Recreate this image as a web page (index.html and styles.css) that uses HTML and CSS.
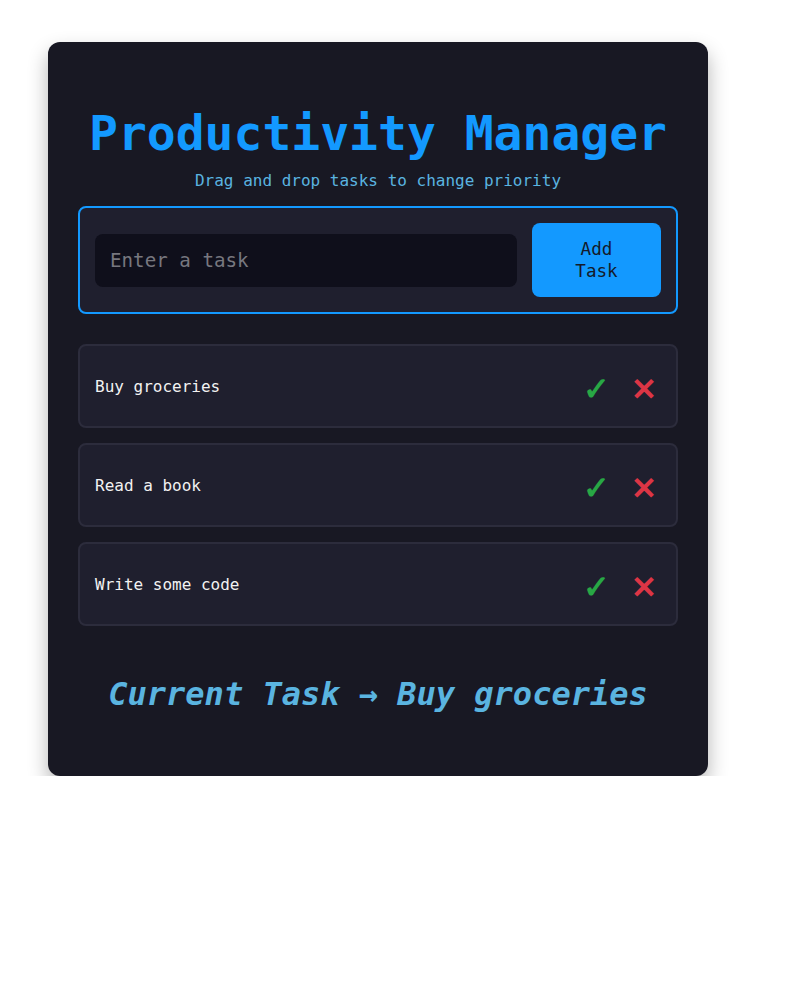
FILE: index.html
```html
<!DOCTYPE html>
<html lang="en">
<head>
<meta charset="utf-8">
<title>Productivity Manager</title>
<link rel="stylesheet" href="styles.css">
</head>
<body>
<div class="card">
  <h1 class="title">Productivity Manager</h1>
  <p class="subtitle">Drag and drop tasks to change priority</p>
  <div class="entry">
    <input class="entry-input" type="text" placeholder="Enter a task">
    <button class="entry-btn">Add Task</button>
  </div>
  <ul class="tasks">
    <li class="task"><span class="task-name">Buy groceries</span><span class="task-actions"><button class="act done">✓</button><button class="act del">✕</button></span></li>
    <li class="task"><span class="task-name">Read a book</span><span class="task-actions"><button class="act done">✓</button><button class="act del">✕</button></span></li>
    <li class="task"><span class="task-name">Write some code</span><span class="task-actions"><button class="act done">✓</button><button class="act del">✕</button></span></li>
  </ul>
  <div class="current">Current Task → Buy groceries</div>
</div>
</body>
</html>
```
FILE: styles.css
```css
html, body {
  margin: 0;
  background: #ffffff;
}
body {
  padding: 42px 0 0 48px;
  font-family: "DejaVu Sans Mono", monospace;
}
.card {
  box-sizing: border-box;
  width: 660px;
  height: 734px;
  padding: 30px;
  background: #181823;
  border-radius: 12px;
  box-shadow: 0 10px 20px rgba(0, 0, 0, 0.3);
}
.title {
  margin: 33px 0 10px;
  font-size: 48px;
  font-weight: bold;
  text-align: center;
  color: #1399ff;
  line-height: 56px;
}
.subtitle {
  margin: 0 0 16px;
  font-size: 16px;
  line-height: 19px;
  text-align: center;
  color: #5ab4e0;
}
.entry {
  display: flex;
  align-items: center;
  gap: 15px;
  padding: 15px;
  border: 2px solid #1399ff;
  border-radius: 8px;
  background: #1f1f2e;
}
.entry-input {
  flex: 1;
  box-sizing: border-box;
  height: 53px;
  padding: 0 15px;
  border: none;
  border-radius: 8px;
  background: #0f0f1b;
  color: #eee;
  font-family: "DejaVu Sans Mono", monospace;
  font-size: 19.2px;
  outline: none;
}
.entry-input::placeholder {
  color: #77777f;
}
.entry-btn {
  box-sizing: border-box;
  width: 129px;
  height: 74px;
  padding: 0 25px;
  border: none;
  border-radius: 8px;
  background: #1399ff;
  color: #141a2a;
  font-family: "DejaVu Sans Mono", monospace;
  font-size: 17.6px;
  line-height: 22px;
}
.tasks {
  list-style: none;
  margin: 30px 0 0;
  padding: 0;
  display: flex;
  flex-direction: column;
  gap: 15px;
}
.task {
  box-sizing: border-box;
  height: 84px;
  display: flex;
  align-items: center;
  justify-content: space-between;
  padding: 0 15px;
  border: 2px solid #2c2c3c;
  border-radius: 8px;
  background: #1f1f2e;
}
.task-name {
  font-size: 16px;
  color: #f2f2f2;
}
.task-actions {
  display: flex;
  align-items: center;
  gap: 21px;
  padding-right: 4px;
}
.act {
  border: none;
  background: none;
  padding: 0;
  font-family: "Noto Sans", sans-serif;
  font-weight: bold;
  font-size: 31px;
  line-height: 1;
  position: relative;
  top: 2px;
}
.done {
  color: #28a745;
  font-size: 32px;
}
.del {
  color: #dc3545;
  font-weight: 600;
}
.current {
  margin-top: 50px;
  font-size: 32px;
  font-weight: bold;
  font-style: italic;
  line-height: 37px;
  text-align: center;
  color: #5ab4e0;
}
```
